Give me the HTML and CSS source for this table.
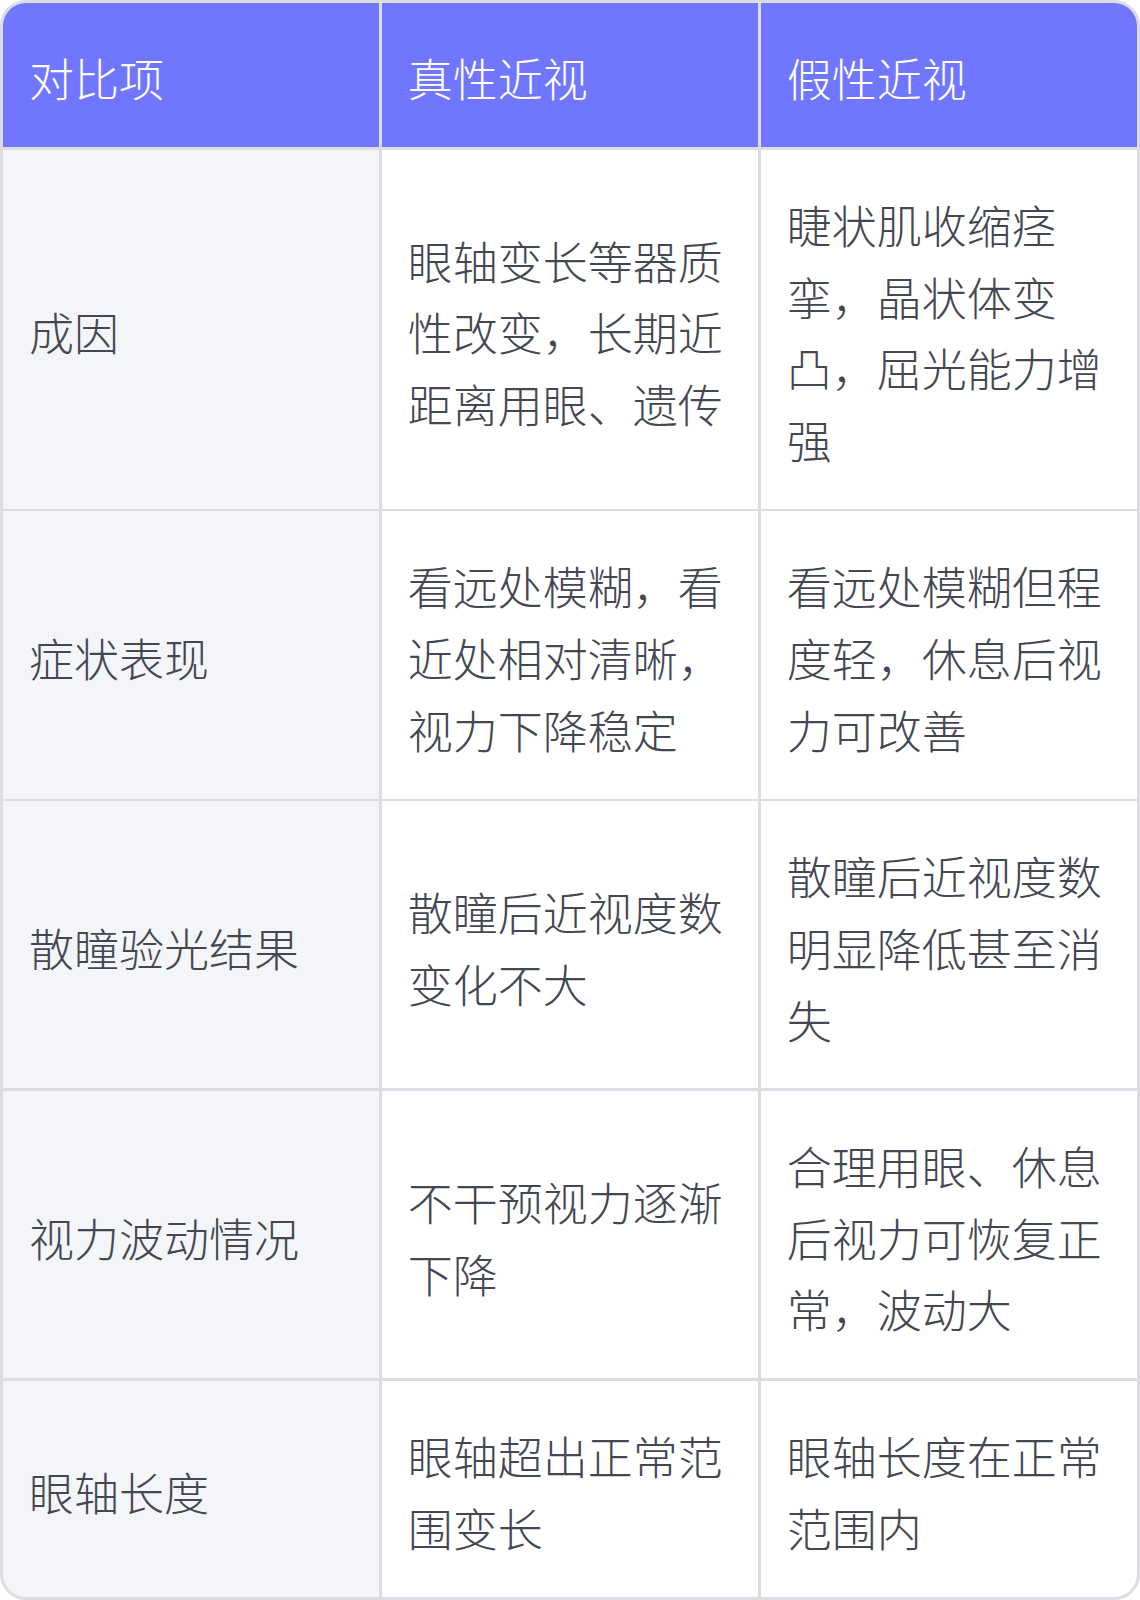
FILE: index.html
```html
<!DOCTYPE html>
<html lang="zh-CN">
<head>
<meta charset="utf-8">
<title>真性近视与假性近视对比</title>
<link rel="stylesheet" href="styles.css">
</head>
<body>
<div class="table">
  <div class="cell head">对比项</div>
  <div class="cell head">真性近视</div>
  <div class="cell head">假性近视</div>

  <div class="cell label">成因</div>
  <div class="cell">眼轴变长等器质性改变，长期近距离用眼、遗传</div>
  <div class="cell">睫状肌收缩痉挛，晶状体变凸，屈光能力增强</div>

  <div class="cell label">症状表现</div>
  <div class="cell">看远处模糊，看近处相对清晰，视力下降稳定</div>
  <div class="cell">看远处模糊但程度轻，休息后视力可改善</div>

  <div class="cell label">散瞳验光结果</div>
  <div class="cell">散瞳后近视度数变化不大</div>
  <div class="cell">散瞳后近视度数明显降低甚至消失</div>

  <div class="cell label">视力波动情况</div>
  <div class="cell">不干预视力逐渐下降</div>
  <div class="cell">合理用眼、休息后视力可恢复正常，波动大</div>

  <div class="cell label">眼轴长度</div>
  <div class="cell">眼轴超出正常范围变长</div>
  <div class="cell">眼轴长度在正常范围内</div>
</div>
</body>
</html>
```

FILE: styles.css
```css
html, body {
  margin: 0;
  padding: 0;
  background: #ffffff;
}

body {
  width: 1140px;
  font-family: "Noto Sans CJK SC", "Noto Sans", sans-serif;
}

.table {
  box-sizing: border-box;
  width: 1140px;
  display: grid;
  grid-template-columns: 1fr 1fr 1fr;
  gap: 2.5px;
  background: #dcdde2;
  border: 3px solid #dcdde2;
  border-radius: 26px;
  overflow: hidden;
}

.cell {
  display: flex;
  align-items: center;
  box-sizing: border-box;
  padding: 39.3px 26px 33.3px;
  font-size: 45px;
  font-weight: 300;
  line-height: 71.6px;
  color: #434752;
  background: #ffffff;
  word-break: break-all;
}

.cell.head {
  background: #7176ff;
  color: #ffffff;
}

.cell.label {
  background: #f4f5f9;
}
```
